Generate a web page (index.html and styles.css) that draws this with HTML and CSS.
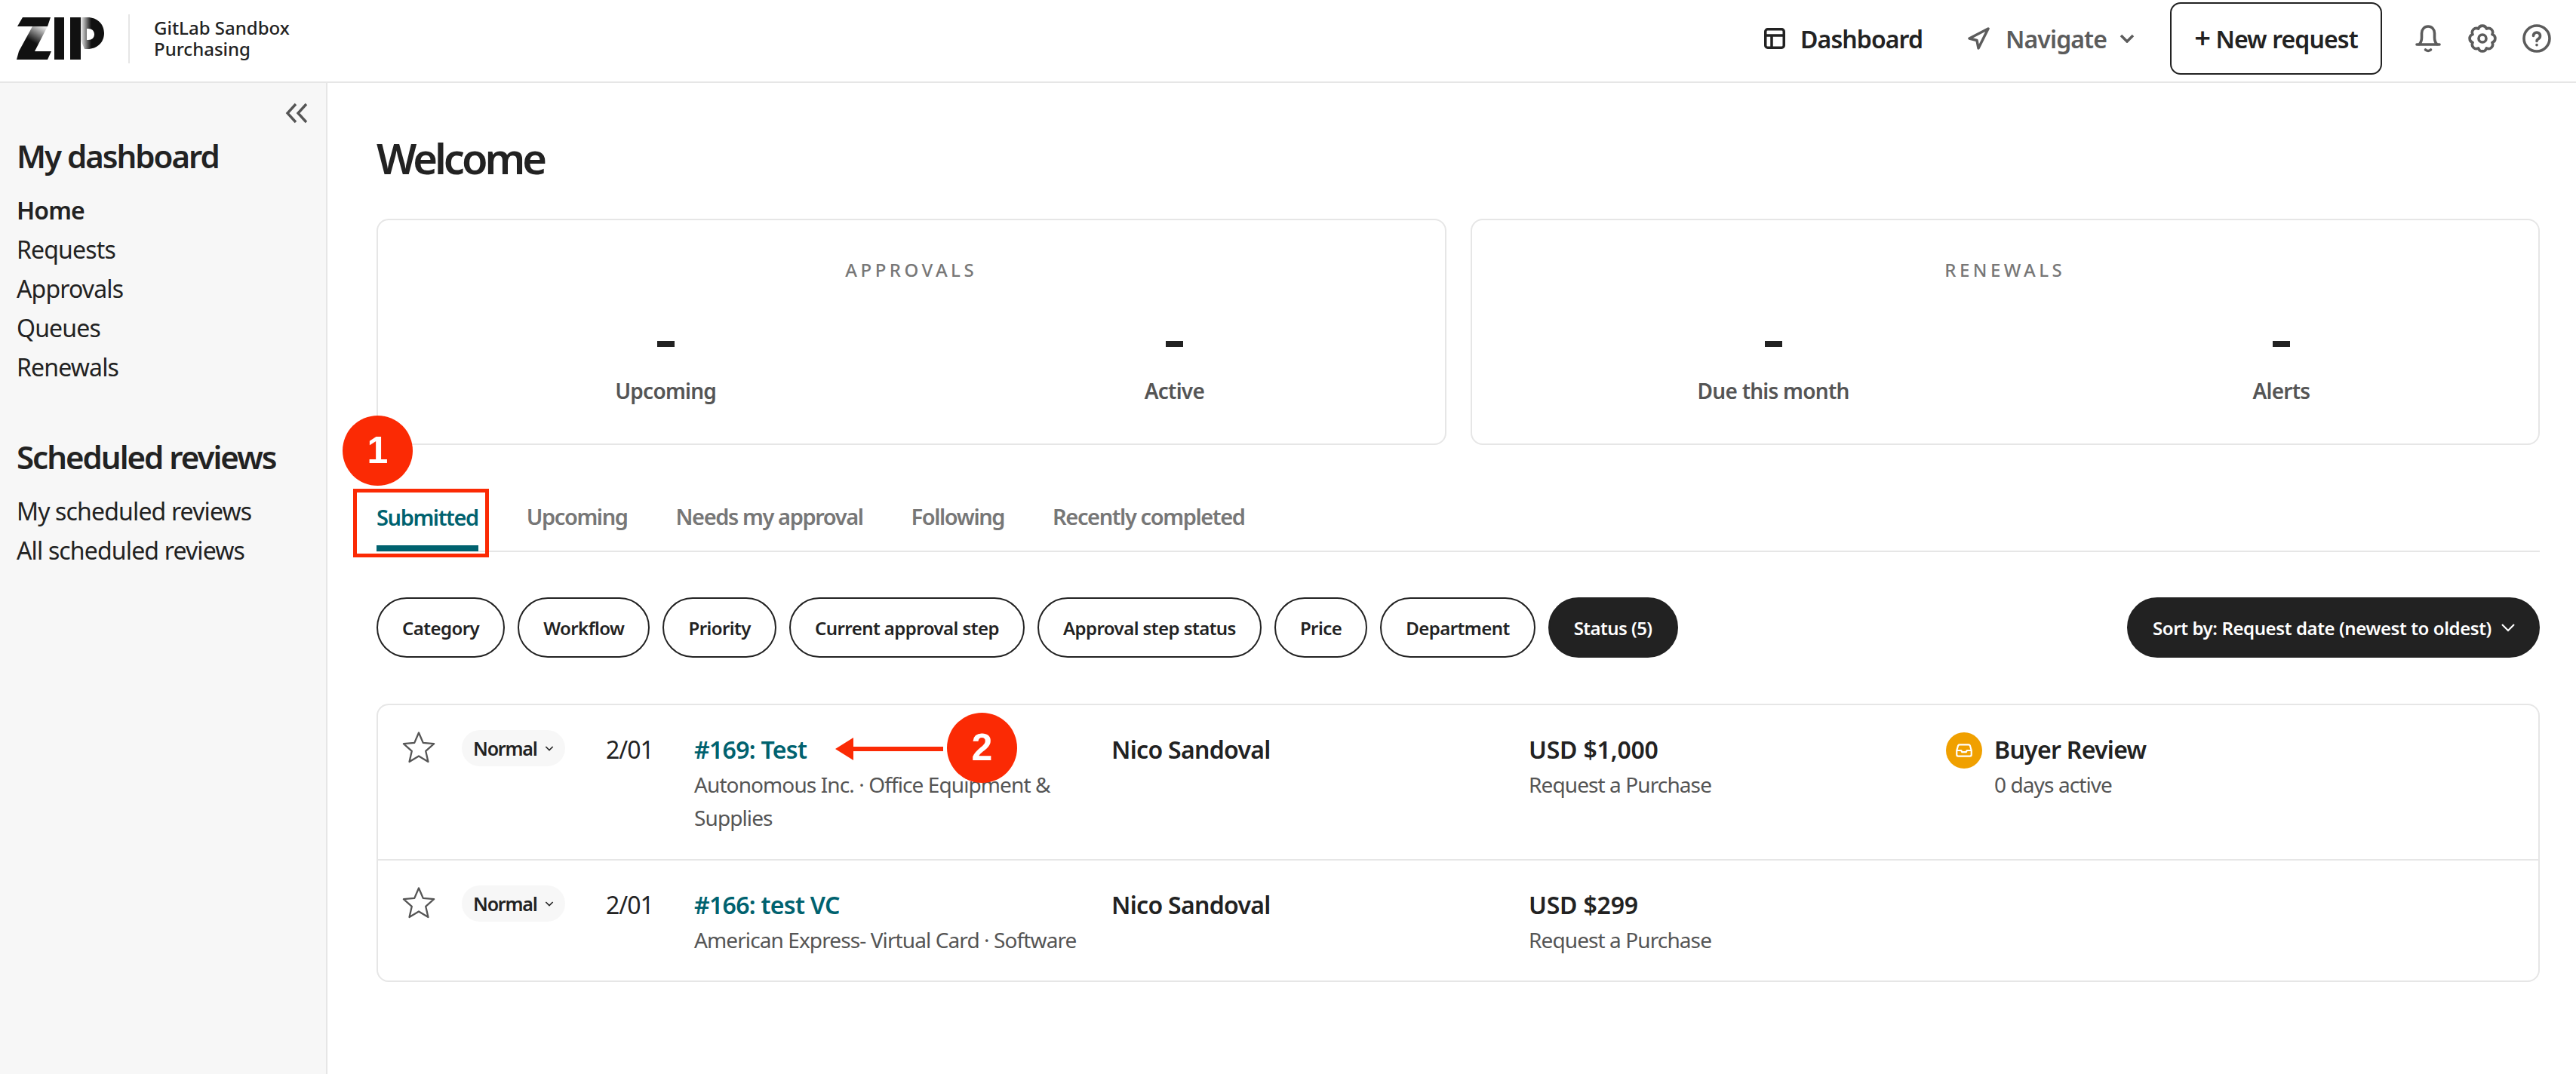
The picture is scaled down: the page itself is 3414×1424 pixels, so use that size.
FILE: index.html
```html
<!DOCTYPE html>
<html lang="en">
<head>
    <meta charset="UTF-8">
    <title>Zip - Dashboard</title>
    <link rel="stylesheet" href="styles.css">
</head>
<body>
    <header class="top-bar">
        <div class="brand">
            <svg class="logo" viewBox="0 0 116 56" width="116" height="56">
                <defs>
                    <linearGradient id="zfade" x1="0.85" y1="0" x2="0.45" y2="0.6">
                        <stop offset="0" stop-color="#e8e8e8"/>
                        <stop offset="1" stop-color="#111"/>
                    </linearGradient>
                    <linearGradient id="pfade" gradientUnits="userSpaceOnUse" x1="85" y1="0" x2="99" y2="0">
                        <stop offset="0" stop-color="#f2f2f2"/>
                        <stop offset="1" stop-color="#111"/>
                    </linearGradient>
                </defs>
                <path d="M8 0H45L41 12H1z" fill="#111"/>
                <path d="M21 12H41L24 45H3z" fill="url(#zfade)"/>
                <path d="M3 45H46L41 56H0z" fill="#111"/>
                <rect x="50" y="0" width="13" height="56" fill="#111"/>
                <rect x="71" y="0" width="14" height="56" fill="#111"/>
                <path fill-rule="evenodd" d="M85 0h9c13 0 22 9 22 21s-9 21-22 21h-4l-5-12zM93 15v15h2c5 0 8-3 8-7.500s-3-7.500-8-7.500z" fill="url(#pfade)"/>
            </svg>
            <span class="brand-rule"></span>
            <div class="brand-text">GitLab Sandbox<br>Purchasing</div>
        </div>
        <nav class="top-nav">
            <a class="nav-item nav-dashboard">
                <svg viewBox="0 0 28 28" width="28" height="28" fill="none" stroke="#222" stroke-width="3.500"><rect x="1.750" y="1.750" width="24.500" height="24.500" rx="3"/><path d="M1.750 10h24.500M10 10v16"/></svg>
                Dashboard
            </a>
            <a class="nav-item nav-muted">
                <svg viewBox="0 0 30 30" width="30" height="30" fill="none" stroke="#5c5c5c" stroke-width="3.500" stroke-linejoin="round"><path d="M27 2 2 15l10 2.500L14 28z"/></svg>
                Navigate
                <svg class="nav-chevron" viewBox="0 0 20 12" width="20" height="12" fill="none" stroke="#5c5c5c" stroke-width="3.500"><path d="m2 2 8 8 8-8"/></svg>
            </a>
            <button class="new-request"><span class="plus">+</span> New request</button>
            <div class="nav-icons">
                <svg viewBox="0 0 40 40" width="40" height="40" fill="none" stroke="#5c5c5c" stroke-width="3.600" stroke-linecap="round" stroke-linejoin="round"><path d="M5 28h30M8 28c2.500-2.500 3.500-5 3.500-9v-6c0-5 3.500-9 8.500-9s8.500 4 8.500 9v6c0 4 1 6.500 3.500 9"/><path d="M16.500 35c2 1.800 5 1.800 7 0"/></svg>
                <svg viewBox="0 0 40 40" width="40" height="40" fill="none" stroke="#5c5c5c" stroke-width="3.600" stroke-linejoin="round"><circle cx="20" cy="20" r="5"/><path d="M14.640 7.070A5.600 5.600 0 0 1 25.360 7.070 5.600 5.600 0 0 1 32.930 14.640 5.600 5.600 0 0 1 32.930 25.360 5.600 5.600 0 0 1 25.360 32.930 5.600 5.600 0 0 1 14.640 32.930 5.600 5.600 0 0 1 7.070 25.360 5.600 5.600 0 0 1 7.070 14.640 5.600 5.600 0 0 1 14.640 7.070z"/></svg>
                <svg viewBox="0 0 40 40" width="40" height="40" fill="none" stroke="#5c5c5c" stroke-width="3.600" stroke-linecap="round"><circle cx="20" cy="20" r="17"/><path d="M15.500 16.500a4.500 4.500 0 1 1 6.800 3.900c-1.500.9-2.300 1.600-2.300 3"/><path d="M20 28.600v.1"/></svg>
            </div>
        </nav>
    </header>

    <div class="page">
        <aside class="sidebar">
            <div class="collapse-row">
                <svg viewBox="0 0 32 32" width="32" height="32" fill="none" stroke="#555" stroke-width="3.400"><path d="M14 4 3 16l11 12M28 4 17 16l11 12"/></svg>
            </div>
            <h2 class="side-title">My dashboard</h2>
            <ul class="side-list">
                <li class="active">Home</li>
                <li>Requests</li>
                <li>Approvals</li>
                <li>Queues</li>
                <li>Renewals</li>
            </ul>
            <h2 class="side-title side-title-second">Scheduled reviews</h2>
            <ul class="side-list">
                <li>My scheduled reviews</li>
                <li>All scheduled reviews</li>
            </ul>
        </aside>

        <main class="content">
            <h1 class="welcome">Welcome</h1>

            <section class="summary">
                <div class="summary-card">
                    <div class="summary-title">APPROVALS</div>
                    <div class="summary-stats stats-approvals">
                        <div class="stat"><span class="stat-num"></span><span class="stat-label">Upcoming</span></div>
                        <div class="stat"><span class="stat-num"></span><span class="stat-label">Active</span></div>
                    </div>
                </div>
                <div class="summary-card">
                    <div class="summary-title">RENEWALS</div>
                    <div class="summary-stats stats-renewals">
                        <div class="stat"><span class="stat-num"></span><span class="stat-label">Due this month</span></div>
                        <div class="stat"><span class="stat-num"></span><span class="stat-label">Alerts</span></div>
                    </div>
                </div>
            </section>

            <div class="tabs">
                <a class="tab tab-active">
                    Submitted
                    <span class="callout-box"></span>
                    <span class="callout callout-one">1</span>
                </a>
                <a class="tab">Upcoming</a>
                <a class="tab">Needs my approval</a>
                <a class="tab">Following</a>
                <a class="tab">Recently completed</a>
            </div>

            <div class="filters">
                <button class="pill">Category</button>
                <button class="pill">Workflow</button>
                <button class="pill">Priority</button>
                <button class="pill">Current approval step</button>
                <button class="pill">Approval step status</button>
                <button class="pill">Price</button>
                <button class="pill">Department</button>
                <button class="pill pill-dark">Status (5)</button>
                <button class="pill pill-dark sort">
                    Sort by: Request date (newest to oldest)
                    <svg viewBox="0 0 12 12" width="24" height="24" fill="none" stroke="#fff" stroke-width="1.100"><path d="m2 4 4 4 4-4"/></svg>
                </button>
            </div>

            <section class="requests">
                <div class="request-row">
                    <svg class="star" viewBox="0 0 24 24" width="46" height="46" fill="none" stroke="#555" stroke-width="1.200" stroke-linejoin="round"><path d="m12 1.800 3 7 7.500.7-5.700 5 1.700 7.400-6.500-3.900-6.500 3.900 1.700-7.400-5.700-5 7.500-.7z"/></svg>
                    <div class="priority">Normal <svg viewBox="0 0 12 12" width="16" height="16" fill="none" stroke="#222" stroke-width="1.200"><path d="m2.500 4.500 3.500 3.500 3.500-3.500"/></svg></div>
                    <div class="date">2/01</div>
                    <div class="cell cell-title">
                        <a class="req-link">#169: Test</a>
                        <div class="sub">Autonomous Inc. · Office Equipment &amp; Supplies</div>
                        <svg class="arrow" viewBox="0 0 143 30" width="143" height="30"><path d="M24 0v12h119v6H24v12L0 15z" fill="#fb2a04"/></svg>
                        <span class="callout callout-two">2</span>
                    </div>
                    <div class="cell"><div class="strong">Nico Sandoval</div></div>
                    <div class="cell"><div class="strong amount">USD $1,000</div><div class="sub">Request a Purchase</div></div>
                    <div class="cell cell-status">
                        <span class="status-dot">
                            <svg viewBox="0 0 24 24" width="26" height="26" fill="none" stroke="#fff" stroke-width="2" stroke-linejoin="round"><path d="M6.500 5h11a2 2 0 0 1 1.900 1.400L21 12v5a2 2 0 0 1-2 2H5a2 2 0 0 1-2-2v-5l1.600-5.600A2 2 0 0 1 6.500 5zM3 12h5.500l1 2h5l1-2H21"/></svg>
                        </span>
                        <div><div class="strong">Buyer Review</div><div class="sub">0 days active</div></div>
                    </div>
                </div>
                <div class="request-row">
                    <svg class="star" viewBox="0 0 24 24" width="46" height="46" fill="none" stroke="#555" stroke-width="1.200" stroke-linejoin="round"><path d="m12 1.800 3 7 7.500.7-5.700 5 1.700 7.400-6.500-3.900-6.500 3.900 1.700-7.400-5.700-5 7.500-.7z"/></svg>
                    <div class="priority">Normal <svg viewBox="0 0 12 12" width="16" height="16" fill="none" stroke="#222" stroke-width="1.200"><path d="m2.500 4.500 3.500 3.500 3.500-3.500"/></svg></div>
                    <div class="date">2/01</div>
                    <div class="cell cell-title">
                        <a class="req-link">#166: test VC</a>
                        <div class="sub">American Express- Virtual Card · Software</div>
                    </div>
                    <div class="cell"><div class="strong">Nico Sandoval</div></div>
                    <div class="cell"><div class="strong amount">USD $299</div><div class="sub">Request a Purchase</div></div>
                </div>
            </section>
        </main>
    </div>
</body>
</html>
```

FILE: styles.css
```css
* {
    box-sizing: border-box;
}
body {
    margin: 0;
    font-family: "Noto Sans", "Open Sans", sans-serif;
    color: #222;
    background: #fff;
    height: 1424px;
    overflow: hidden;
}
.top-bar {
    height: 110px;
    border-bottom: 2px solid #e6e6e6;
    display: flex;
    justify-content: space-between;
    align-items: center;
    padding: 0 32px 6px 22px;
}
.brand {
    display: flex;
    align-items: center;
}
.brand-rule {
    width: 2px;
    height: 65px;
    margin: 0 32px;
    background: #e6e6e6;
}
.brand-text {
    font-size: 24px;
    line-height: 28px;
    font-weight: 500;
}
.top-nav {
    display: flex;
    align-items: center;
}
.nav-item {
    display: flex;
    align-items: center;
    gap: 20px;
    font-size: 32px;
    letter-spacing: -0.9px;
    font-weight: 600;
}
.nav-dashboard {
    margin-right: 60px;
}
.nav-muted {
    color: #5c5c5c;
    margin-right: 47px;
}
.nav-chevron {
    margin-left: -3px;
}
.new-request {
    width: 281px;
    height: 96px;
    border: 2px solid #222;
    border-radius: 14px;
    background: #fff;
    color: #222;
    font-family: inherit;
    font-size: 32px;
    letter-spacing: -0.9px;
    font-weight: 600;
    margin-right: 41px;
}
.plus {
    font-size: 38px;
    line-height: 1;
}
.nav-icons {
    display: flex;
    align-items: center;
    gap: 32px;
}
.page {
    display: flex;
    height: 1314px;
}
.sidebar {
    width: 434px;
    flex-shrink: 0;
    background: #f7f7f7;
    border-right: 2px solid #e6e6e6;
    padding: 24px 22px;
}
.collapse-row {
    display: flex;
    justify-content: flex-end;
    height: 40px;
}
.side-title {
    font-size: 42px;
    letter-spacing: -2px;
    line-height: 56px;
    font-weight: 600;
    margin: 5px 0 18px;
}
.side-title-second {
    margin-top: 65px;
}
.side-list {
    list-style: none;
    margin: 0;
    padding: 0;
    font-size: 32px;
    letter-spacing: -0.85px;
    line-height: 52px;
}
.side-list .active {
    font-weight: 600;
}
.content {
    flex: 1;
    padding: 67px 48px 0 65px;
}
.welcome {
    font-size: 56px;
    letter-spacing: -4px;
    line-height: 64px;
    font-weight: 600;
    margin: 0 0 49px;
}
.summary {
    display: flex;
    gap: 32px;
}
.summary-card {
    flex: 1;
    height: 300px;
    border: 2px solid #e6e6e6;
    border-radius: 16px;
    padding-top: 50px;
    text-align: center;
}
.summary-title {
    font-size: 24px;
    line-height: 32px;
    letter-spacing: 4.500px;
    color: #777;
    font-weight: 500;
}
.summary-stats {
    display: flex;
    margin-top: 78px;
}
.stats-approvals {
    padding: 0 21px 0 44px;
}
.stats-renewals {
    padding: 0 4px 0 63px;
}
.stat {
    flex: 1;
    display: flex;
    flex-direction: column;
    align-items: center;
}
.stat-num {
    width: 23px;
    height: 8px;
    background: #222;
}
.stat-label {
    margin-top: 38px;
    font-size: 28px;
    letter-spacing: -0.75px;
    line-height: 40px;
    font-weight: 600;
    color: #555;
}
.tabs {
    display: flex;
    height: 142px;
    gap: 64px;
    border-bottom: 2px solid #e6e6e6;
    align-items: flex-end;
}
.tab {
    position: relative;
    height: 92px;
    padding-top: 27px;
    font-size: 29px;
    letter-spacing: -1.400px;
    line-height: 40px;
    font-weight: 600;
    color: #777;
}
.tab-active {
    color: #00626f;
    border-bottom: 8px solid #00626f;
    margin-bottom: -1px;
}
.callout-box {
    position: absolute;
    left: -31px;
    top: 9px;
    width: 180px;
    height: 91px;
    border: 5px solid #fb2a04;
}
.callout {
    position: absolute;
    width: 93px;
    height: 93px;
    border-radius: 50%;
    background: #fb2a04;
    color: #fff;
    font-family: "Liberation Sans", sans-serif;
    font-size: 50px;
    letter-spacing: 0;
    font-weight: 700;
    line-height: 93px;
    text-align: center;
}
.callout-one {
    left: -45px;
    top: -88px;
}
.callout-two {
    left: 335px;
    top: -26px;
}
.arrow {
    position: absolute;
    left: 187px;
    top: 7px;
}
.filters {
    display: flex;
    gap: 17px;
    margin-top: 60px;
}
.pill {
    height: 80px;
    padding: 0 32px;
    border: 2px solid #222;
    border-radius: 40px;
    background: #fff;
    color: #222;
    font-family: inherit;
    font-size: 24px;
    letter-spacing: -0.55px;
    font-weight: 600;
}
.pill-dark {
    background: #222;
    color: #fff;
}
.sort {
    margin-left: auto;
    display: flex;
    align-items: center;
    gap: 10px;
    padding-right: 28px;
    letter-spacing: -0.4px;
}
.requests {
    margin-top: 61px;
    border: 2px solid #e6e6e6;
    border-radius: 16px;
}
.request-row {
    display: flex;
    align-items: flex-start;
    padding: 36px 0 33px 31px;
}
.request-row + .request-row {
    border-top: 2px solid #e6e6e6;
    padding-bottom: 32px;
}
.star {
    margin: -3px 34px 0 0;
    flex-shrink: 0;
}
.priority {
    width: 137px;
    height: 48px;
    border-radius: 24px;
    background: #f7f7f7;
    margin-top: -3px;
    padding-left: 15px;
    display: flex;
    align-items: center;
    gap: 8px;
    font-size: 25px;
    letter-spacing: -1.200px;
    font-weight: 600;
    flex-shrink: 0;
}
.date {
    width: 117px;
    margin-left: 54px;
    font-size: 32px;
    letter-spacing: -1px;
    line-height: 46px;
    flex-shrink: 0;
}
.cell {
    width: 553px;
    flex-shrink: 0;
}
.cell-title {
    position: relative;
    padding-right: 30px;
}
.req-link {
    color: #00626f;
    font-size: 32px;
    letter-spacing: -0.7px;
    line-height: 46px;
    font-weight: 600;
    display: block;
}
.strong {
    font-size: 32px;
    letter-spacing: -0.7px;
    line-height: 46px;
    font-weight: 600;
}
.amount {
    letter-spacing: -0.2px;
}
.sub {
    font-size: 28px;
    letter-spacing: -0.9px;
    line-height: 44px;
    color: #555;
    margin-top: 1px;
}
.cell-status {
    display: flex;
    gap: 16px;
}
.status-dot {
    width: 48px;
    height: 48px;
    border-radius: 50%;
    background: #f0a000;
    display: flex;
    align-items: center;
    justify-content: center;
    flex-shrink: 0;
}
```
